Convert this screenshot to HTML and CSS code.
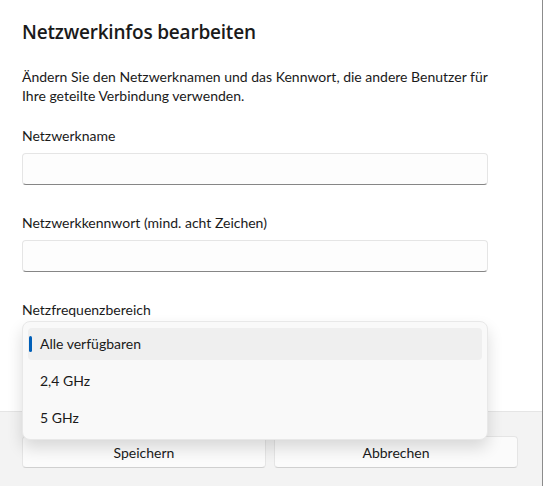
FILE: index.html
```html
<!DOCTYPE html>
<html lang="de">
<head>
  <meta charset="UTF-8">
  <meta name="viewport" content="width=device-width, initial-scale=1">
  <title>Netzwerkinfos bearbeiten</title>
  <link rel="stylesheet" href="styles.css">
</head>
<body>

  <div class="window">
    <div class="content">
      <h1>Netzwerkinfos bearbeiten</h1>
      <p class="desc">Ändern Sie den Netzwerknamen und das Kennwort, die andere Benutzer für Ihre geteilte Verbindung verwenden.</p>

      <div class="field">
        <label>Netzwerkname</label>
        <div class="textbox"></div>
      </div>

      <div class="field">
        <label>Netzwerkkennwort (mind. acht Zeichen)</label>
        <div class="textbox"></div>
      </div>

      <div class="field combo-field">
        <label>Netzfrequenzbereich</label>
        <div class="textbox"></div>

        <!-- open dropdown of the combo box -->
        <div class="popup">
          <div class="option selected">Alle verfügbaren</div>
          <div class="option">2,4 GHz</div>
          <div class="option">5 GHz</div>
        </div>
      </div>
    </div>

    <div class="footer">
      <button>Speichern</button>
      <button>Abbrechen</button>
    </div>
  </div>

</body>
</html>
```

FILE: styles.css
```css
body {
  margin: 0;
  font-family: 'Lato', 'Open Sans', sans-serif;
  font-size: 14px;
  color: #1a1a1a;
  background: #ffffff;
}
.window {
  width: 542px;
  height: 486px;
  border-right: 1px solid #8c8c8c;
  display: flex;
  flex-direction: column;
  background: #ffffff;
}
.content {
  height: 411px;
  padding: 18px 54px 0 22px;
  box-sizing: border-box;
}
h1 {
  margin: 0;
  font-family: 'Open Sans', sans-serif;
  font-size: 19px;
  letter-spacing: -0.2px;
  line-height: 28px;
  font-weight: 600;
}
.desc {
  margin: 21px 0 21px;
  line-height: 19px;
}
.field {
  display: flex;
  flex-direction: column;
  gap: 7px;
  margin-bottom: 28px;
}
.field label {
  line-height: 20px;
}
.textbox {
  height: 32px;
  box-sizing: border-box;
  background: #fdfdfd;
  border: 1px solid #e5e5e5;
  border-bottom-color: #868686;
  border-radius: 4px;
}
.combo-field {
  position: relative;
}
.popup {
  position: absolute;
  left: 0;
  right: 0;
  top: 21px;
  padding: 6px 5px 5px;
  display: flex;
  flex-direction: column;
  gap: 5px;
  background: #f9f9f9;
  border: 1px solid #e8e8e8;
  border-radius: 8px;
  box-shadow: 0 8px 16px rgba(0,0,0,0.14);
}
.option {
  position: relative;
  height: 32px;
  line-height: 32px;
  padding-left: 12px;
  border-radius: 4px;
}
.option.selected {
  background: #efefef;
}
.option.selected::before {
  content: '';
  position: absolute;
  left: 1px;
  top: 8px;
  width: 3px;
  height: 16px;
  border-radius: 2px;
  background: #005fb8;
}
.footer {
  flex: 1;
  background: #f3f3f3;
  border-top: 1px solid #e5e5e5;
  padding: 24px 24px 0 22px;
  display: flex;
  gap: 8px;
  align-items: flex-start;
}
.footer button {
  flex: 1;
  height: 32px;
  font-family: inherit;
  font-size: 14px;
  color: #1a1a1a;
  background: #fbfbfb;
  border: 1px solid #e5e5e5;
  border-bottom-color: #d0d0d0;
  border-radius: 4px;
}
```
